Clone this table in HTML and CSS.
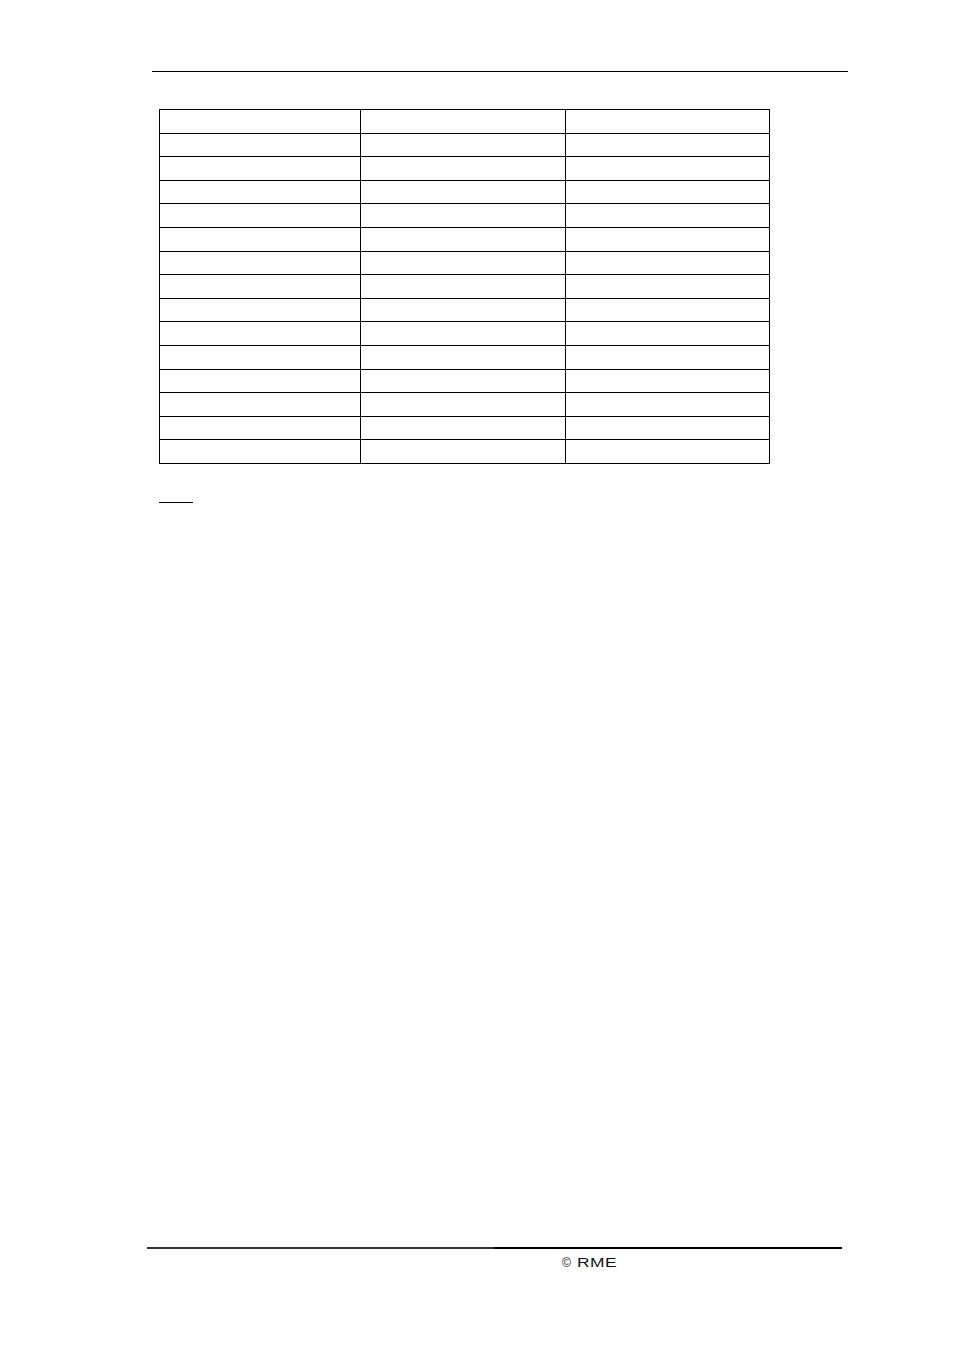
FILE: index.html
```html
<!DOCTYPE html>
<html>
<head>
<meta charset="utf-8">
<link rel="stylesheet" href="styles.css">
</head>
<body>
<div class="page">
  <div class="header-rule"></div>
  <table class="grid">
    <colgroup><col class="c1"><col class="c2"><col class="c3"></colgroup>
    <tbody>
      <tr><td></td><td></td><td></td></tr>
      <tr><td></td><td></td><td></td></tr>
      <tr><td></td><td></td><td></td></tr>
      <tr><td></td><td></td><td></td></tr>
      <tr><td></td><td></td><td></td></tr>
      <tr><td></td><td></td><td></td></tr>
      <tr><td></td><td></td><td></td></tr>
      <tr><td></td><td></td><td></td></tr>
      <tr><td></td><td></td><td></td></tr>
      <tr><td></td><td></td><td></td></tr>
      <tr><td></td><td></td><td></td></tr>
      <tr><td></td><td></td><td></td></tr>
      <tr><td></td><td></td><td></td></tr>
      <tr><td></td><td></td><td></td></tr>
      <tr><td></td><td></td><td></td></tr>
    </tbody>
  </table>
  <div class="note-rule"></div>
  <div class="spacer"></div>
  <div class="footer-rule"></div>
  <div class="footer-text"><span class="copy">©</span><span class="brand">RME</span></div>
</div>
</body>
</html>
```
FILE: styles.css
```css
html, body {
  margin: 0;
  padding: 0;
  background: #fff;
}
.page {
  width: 954px;
  height: 1350px;
  padding-top: 71px;
  box-sizing: border-box;
  font-family: "Liberation Sans", Arial, sans-serif;
}
.header-rule {
  margin-left: 152px;
  width: 696px;
  height: 1px;
  background: #000;
}
.grid {
  margin-top: 37px;
  margin-left: 159px;
  width: 610px;
  border-collapse: collapse;
  table-layout: fixed;
}
.c1 { width: 201px; }
.c2 { width: 205px; }
.c3 { width: 204px; }
.grid td {
  border: 1.3px solid #000;
  height: 22.6px;
  padding: 0;
}
.note-rule {
  margin-top: 38px;
  margin-left: 159px;
  width: 34px;
  height: 1px;
  background: #000;
}
.spacer {
  height: 744px;
}
.footer-rule {
  margin-left: 147px;
  width: 695px;
  height: 2px;
  background: linear-gradient(to right, #333 0, #333 50%, #000 50%, #000 100%);
}
.footer-text {
  margin-top: 7px;
  margin-left: 562px;
  font-size: 12px;
  color: #111;
  line-height: 14px;
  white-space: nowrap;
  display: flex;
  align-items: baseline;
}
.copy {
  font-size: 12px;
}
.brand {
  display: inline-block;
  margin-left: 6px;
  transform: scaleX(1.45);
  transform-origin: left center;
  letter-spacing: 0.3px;
}
```
